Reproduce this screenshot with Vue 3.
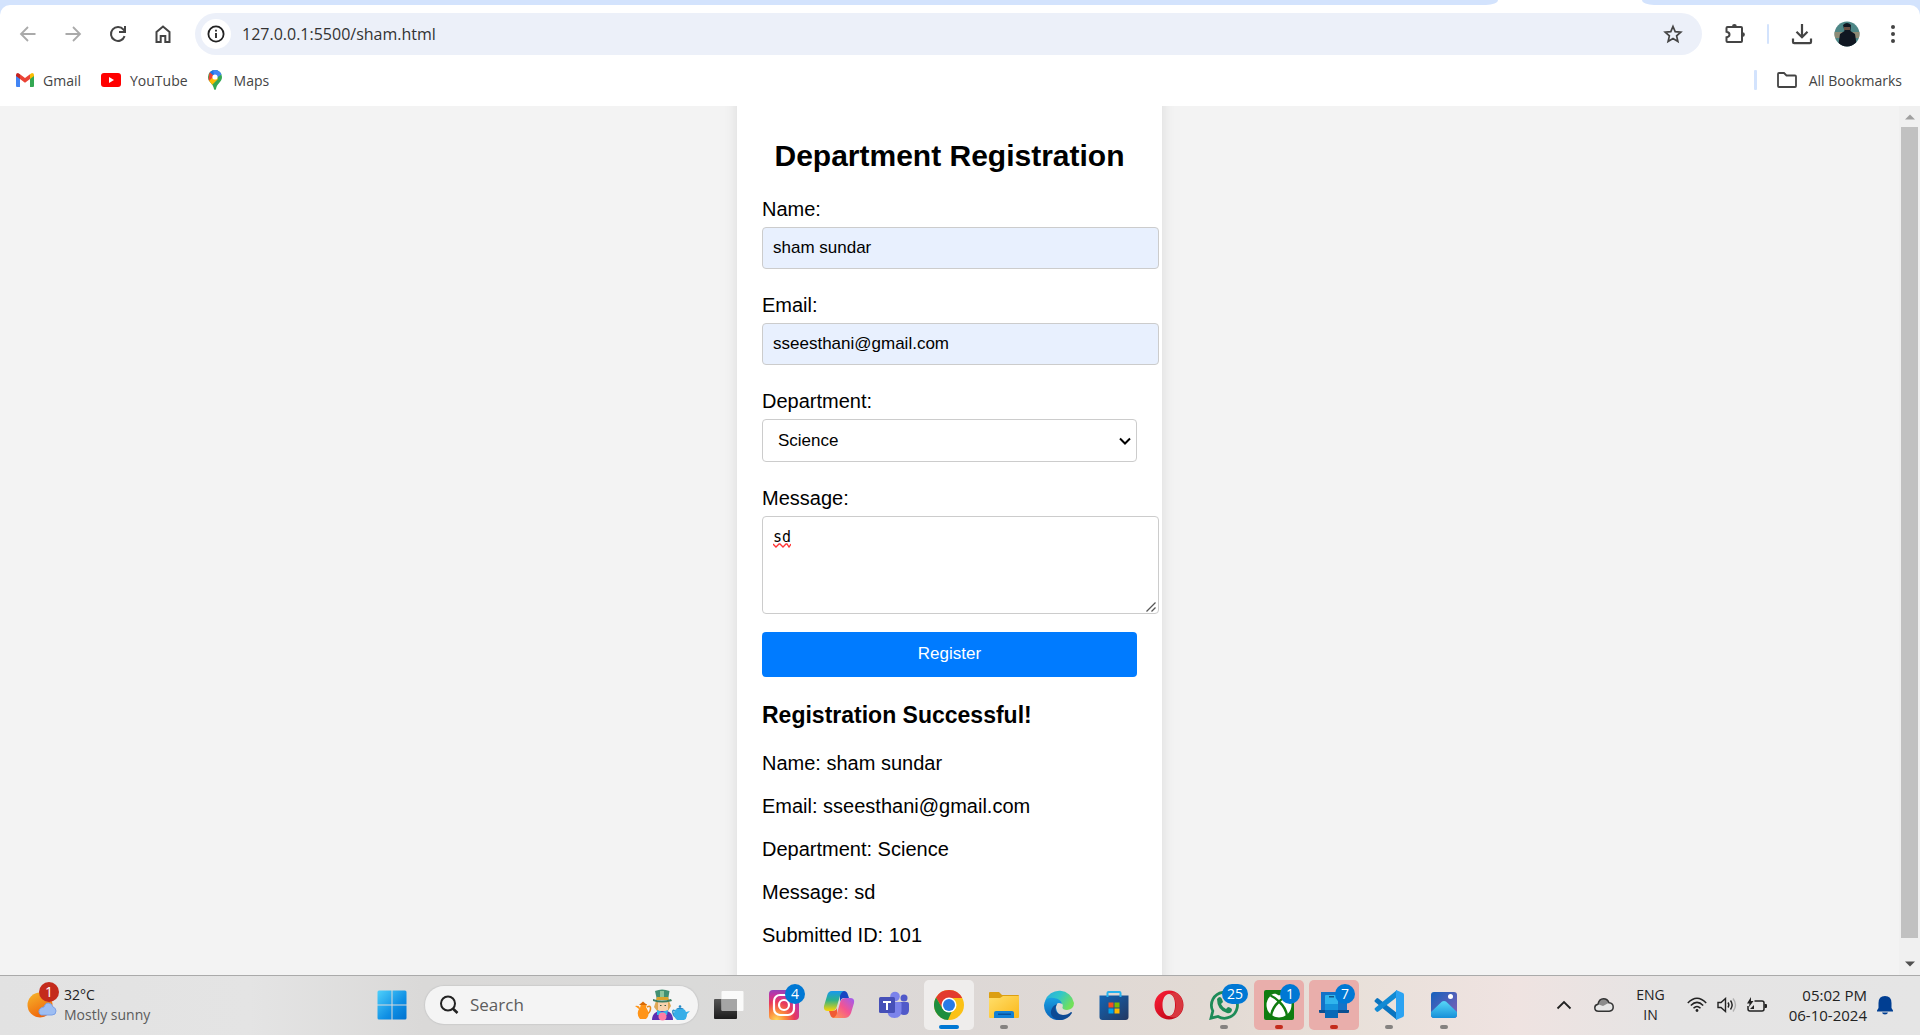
<script setup>
import { ref, reactive } from 'vue'

const address = ref('127.0.0.1:5500/sham.html')
const form = reactive({
  name: 'sham sundar',
  email: 'sseesthani@gmail.com',
  department: 'Science',
  message: 'sd'
})
const submitted = ref({ ...form, id: 101 })

function register() {
  submitted.value = { ...form, id: 101 }
}
</script>

<template>
  <div class="screen">
    <header class="browser">
      <div class="tabs">
        <div class="strip strip-left"></div>
        <div class="strip strip-right"></div>
      </div>
      <div class="chrome">
        <div class="toolbar">
          <button class="tool faded" aria-label="Back">
            <svg width="20" height="20" viewBox="0 0 20 20" fill="none" stroke="currentColor" stroke-width="1.8"><path d="M17.5 10H3.5M10 3 3 10l7 7" /></svg>
          </button>
          <button class="tool faded" aria-label="Forward">
            <svg width="20" height="20" viewBox="0 0 20 20" fill="none" stroke="currentColor" stroke-width="1.8"><path d="M2.500 10H16.500M10 3l7 7-7 7" /></svg>
          </button>
          <button class="tool" aria-label="Reload">
            <svg width="20" height="20" viewBox="0 0 20 20" fill="none" stroke="currentColor" stroke-width="2"><path d="M16.600 12.200A7 7 0 1 1 15.500 5.600L17 7.200M17 2v6h-6" /></svg>
          </button>
          <button class="tool" aria-label="Home">
            <svg width="20" height="20" viewBox="0 0 20 20" fill="none" stroke="currentColor" stroke-width="2"><path d="M3.500 8 10 2.500 16.500 8v10H12.300v-6H7.700v6H3.500z" /></svg>
          </button>
          <div class="omnibox">
            <button class="info" aria-label="Site information">
              <svg width="18" height="18" viewBox="0 0 18 18"><circle cx="9" cy="9" r="7.600" fill="none" stroke="#222" stroke-width="1.800" /><path d="M8.100 8h1.800v5H8.100zM8.100 4.800h1.800v1.800H8.100z" fill="#222" /></svg>
            </button>
            <input v-model="address" class="address" aria-label="Address" />
            <button class="star" aria-label="Bookmark this page">
              <svg width="20" height="20" viewBox="0 0 20 20" fill="none" stroke="#444" stroke-width="1.700"><path d="M10 2.500l2.200 5.200 5.600.5-4.200 3.700 1.300 5.500L10 14.500l-4.900 2.900 1.300-5.500-4.200-3.700 5.600-.5z" /></svg>
            </button>
          </div>
          <button class="tool" aria-label="Extensions">
            <svg width="22" height="22" viewBox="0 0 22 22" fill="none" stroke="currentColor" stroke-width="2"><path d="M3.500 4h13.500q1 0 1 1v13q0 1-1 1H3.500q-1 0-1-1v-3.700q3-.5 3-2.800t-3-2.800V5q0-1 1-1z" /><path d="M8 3.500a2.400 2.400 0 0 1 4.800 0zM18.500 9.200a2.400 2.400 0 0 1 0 4.800z" fill="currentColor" stroke="none" /></svg>
          </button>
          <span class="bar"></span>
          <button class="tool" aria-label="Downloads">
            <svg width="22" height="22" viewBox="0 0 22 22" fill="none" stroke="currentColor" stroke-width="2.200"><path d="M11 1v13M5.500 8.800 11 14.300l5.500-5.500M2 15.500v3.500q0 1.200 1.200 1.200h15.600q1.200 0 1.200-1.200v-3.500" /></svg>
          </button>
          <button class="tool profile" aria-label="Profile">
            <svg width="26" height="26" viewBox="0 0 26 26"><defs><clipPath id="face"><circle cx="13" cy="13" r="12.500" /></clipPath></defs><g clip-path="url(#face)"><path fill="#4e8787" d="M0 0h26v26H0z" /><path fill="#8d8b76" d="M0 11h26v6H0z" /><path fill="#101722" d="M9 4q4-4 8 0l-.5 6 4.500 3 2 13H4l2-13 4.500-3z" /><path fill="#6b4f42" d="M10 6h6v3h-6z" /></g></svg>
          </button>
          <button class="tool" aria-label="Menu">
            <svg width="20" height="20" viewBox="0 0 20 20" fill="currentColor"><circle cx="10" cy="3" r="2" /><circle cx="10" cy="10" r="2" /><circle cx="10" cy="17" r="2" /></svg>
          </button>
        </div>
        <nav class="bookmarks">
          <a href="#">
            <svg width="18" height="14" viewBox="0 0 18 14"><path fill="#4285f4" d="M0 2v11q0 1 1 1h3V5z" /><path fill="#34a853" d="M14 5v9h3q1 0 1-1V2z" /><path fill="#ea4335" d="M4 6V1.200l5 3.900 5-3.900V6L9 9.800z" /><path fill="#c5221f" d="M0 2q0-2 2-2l2 1.200V6L0 3z" /><path fill="#fbbc04" d="M18 2q0-2-2-2l-2 1.200V6l4-3z" /></svg>
            Gmail
          </a>
          <a href="#">
            <svg width="20" height="14" viewBox="0 0 20 14"><rect width="20" height="14" rx="3" fill="#f00" /><path d="M8 4v6l5-3z" fill="#fff" /></svg>
            YouTube
          </a>
          <a href="#" class="spaced">
            <svg width="14" height="20" viewBox="0 0 14 20"><defs><clipPath id="pin"><path d="M7 0a7 7 0 0 1 7 7c0 5-5 6-6 12q-1 2-2 0C5 13 0 12 0 7a7 7 0 0 1 7-7z" /></clipPath></defs><g clip-path="url(#pin)"><path fill="#34a853" d="M0 0h14v20H0z" /><path fill="#fbbc04" d="M-1 12 7 4l3 5-8 8z" /><path fill="#1a73e8" d="M0 0h10L5 8z" /><path fill="#4285f4" d="M5 0h9v4L7 9z" /><path fill="#ea4335" d="M1.500 2 6 6l-6 6z" /></g><circle cx="7" cy="7" r="2.600" fill="#fff" /></svg>
            Maps
          </a>
          <span class="bar bar-wide"></span>
          <a href="#" class="spaced">
            <svg width="20" height="16" viewBox="0 0 20 16" fill="none" stroke="#444" stroke-width="1.800"><path d="M1 13V2q0-1 1-1h5l2.500 2.500H18q1 0 1 1V14q0 1-1 1H2q-1 0-1-1z" /></svg>
            All Bookmarks
          </a>
        </nav>
      </div>
    </header>

    <main class="viewport">
      <div class="page">
        <section class="card">
          <h2>Department Registration</h2>
          <form @submit.prevent="register">
            <label for="name">Name:</label>
            <input id="name" v-model="form.name" type="text" />
            <label for="email">Email:</label>
            <input id="email" v-model="form.email" type="email" />
            <label for="department">Department:</label>
            <select id="department" v-model="form.department">
              <option>Science</option>
              <option>Arts</option>
              <option>Commerce</option>
            </select>
            <label for="message">Message:</label>
            <div class="message">
              <textarea id="message" v-model="form.message" spellcheck="false"></textarea>
              <svg class="squiggle" width="18" height="5" viewBox="0 0 18 5" fill="none" stroke="#f33" stroke-width="1.300"><path d="M0 1l3 3 3-3 1 0 3 3 3-3 1 0 2 3 2-3" /></svg>
              <svg class="grip" width="10" height="10" viewBox="0 0 10 10" fill="none" stroke="#555" stroke-width="1.300"><path d="M.500 9.500l9-9M5.500 9.500l4-4" /></svg>
            </div>
            <button class="submit" type="submit">Register</button>
          </form>
          <h3>Registration Successful!</h3>
          <p>Name: {{ submitted.name }}</p>
          <p>Email: {{ submitted.email }}</p>
          <p>Department: {{ submitted.department }}</p>
          <p>Message: {{ submitted.message }}</p>
          <p>Submitted ID: {{ submitted.id }}</p>
        </section>
      </div>
      <div class="scrollbar">
        <svg width="10" height="6" viewBox="0 0 10 6"><path fill="#a0a0a0" d="M0 5.500 5 .5l5 5z" /></svg>
        <span class="thumb"></span>
        <svg width="10" height="6" viewBox="0 0 10 6"><path fill="#505050" d="M0 .5h10l-5 5z" /></svg>
      </div>
    </main>

    <footer class="taskbar">
      <button class="weather">
        <span class="weather-icon">
          <svg width="30" height="28" viewBox="0 0 30 28"><defs><linearGradient id="sun" x1="0" y1="0" x2="0.500" y2="1"><stop offset="0" stop-color="#f6b72b" /><stop offset="1" stop-color="#f0660c" /></linearGradient></defs><circle cx="13" cy="14" r="12.500" fill="url(#sun)" /><path d="M14 24a4 4 0 0 1 0-7q2-1 3-1 2-6 7-3 1 1 2 3 3 1 3 4 0 4-4 4z" fill="#9dbdf2" stroke="#7ba0e6" /></svg>
          <span class="badge alert">1</span>
        </span>
        <span class="forecast"><span class="degrees">32°C</span><span>Mostly sunny</span></span>
      </button>

      <div class="apps">
        <button class="app" aria-label="Start">
          <svg width="30" height="30" viewBox="0 0 30 30"><defs><linearGradient id="win" x1="0" y1="0" x2="1" y2="1"><stop offset="0" stop-color="#4fd0fb" /><stop offset="0.600" stop-color="#0f8fe4" /><stop offset="1" stop-color="#0072d0" /></linearGradient></defs><path fill="url(#win)" d="M2 .5h12.500v14H.5V2Q.500.5 2 .5zM15.500.5H28q1.500 0 1.500 1.500v12.500h-14zM.500 15.500h14v14H2q-1.500 0-1.500-1.500zM15.500 15.500h14V28q0 1.500-1.500 1.500H15.500z" /></svg>
        </button>
        <div class="search">
          <svg width="20" height="20" viewBox="0 0 20 20" fill="none" stroke="#222" stroke-width="2"><circle cx="9" cy="8.500" r="7" /><path d="M13.800 13.500 18.500 18" stroke-width="2.600" /></svg>
          <input type="search" placeholder="Search" aria-label="Search" />
          <svg width="56" height="32" viewBox="0 0 56 32">
            <path fill="none" stroke="#ea8a1c" stroke-width="1.600" d="M12 18q4-2 3.500 2t-4 5" /><path fill="#ff9417" d="M6 15h6l-1 3q5 8 0 12H5q-4-5-1-10L0 17q4-1 5 2z" /><path fill="#d96a05" d="M8 12.500 12 16H4z" />
            <path fill="#dfa855" d="M21 12h13l2 5-3 5H22l-3-4z" /><path fill="#f8d2ad" d="M23 13h10v8q-5 4-10 0z" /><path fill="#429072" d="M20 2q7-3 14.500 0l-1.500 9H22z" /><path fill="#8bc49c" d="M25 2h4v6h-4z" /><path fill="#dba32d" d="M22 8h11l1 3H21z" /><path fill="#3d7d62" d="M18 10q9 3 18 0l1 2q-10 3-19 0z" /><path fill="#5f2fb1" d="M17 31q0-7 7-9l8 0q6 2 6 9z" /><path fill="#34b5ec" d="m22 21 5 2 6-2-1 5H22z" /><circle cx="27.500" cy="27.500" r="4" fill="#ff7da4" /><path stroke="#345b47" stroke-width="1.200" d="M25 16.500h1.500M29.500 16.500H31" />
            <path fill="none" stroke="#2b8fc9" stroke-width="1.500" d="M40 22q-3-2-2 2t4 4" /><path fill="#36aee8" d="M40 21q5-4 10 0l1 2 4-1-3 3q0 5-3 6h-7q-5-4-2-10z" /><path fill="#2789c5" d="M41 20q4-3 8 0z" /><circle cx="45" cy="17.500" r="1.300" fill="#2789c5" />
          </svg>
        </div>
        <button class="app" aria-label="Task view">
          <svg width="30" height="30" viewBox="0 0 30 30"><defs><linearGradient id="tv" x1="0" y1="0" x2="0" y2="1"><stop offset="0" stop-color="#555" /><stop offset="1" stop-color="#1c1c1c" /></linearGradient></defs><rect y="9" width="23" height="20" rx="1" fill="url(#tv)" /><rect x="7.500" y="1" width="22" height="20" rx="1" fill="#fff" opacity=".85" /><path fill="#a5a5a5" d="M8 9h15v12H8z" /></svg>
        </button>
        <button class="app" aria-label="Instagram">
          <svg width="30" height="30" viewBox="0 0 30 30"><defs><radialGradient id="ig" cx=".25" cy="1" r="1.200"><stop offset="0" stop-color="#ffd95a" /><stop offset=".25" stop-color="#fb8a3c" /><stop offset=".5" stop-color="#e93a5a" /><stop offset=".7" stop-color="#c433a0" /><stop offset="1" stop-color="#5b55d6" /></radialGradient></defs><rect width="30" height="30" rx="4" fill="url(#ig)" /><g fill="none" stroke="#fff" stroke-width="2.200"><rect x="5" y="5" width="20" height="20" rx="6" /><circle cx="15" cy="15" r="5" /></g><circle cx="21" cy="9" r="1.500" fill="#fff" /></svg>
          <span class="badge">4</span>
        </button>
        <button class="app" aria-label="Copilot">
          <svg width="32" height="30" viewBox="0 0 32 30"><defs><linearGradient id="ca" x1="0" y1="0" x2="0" y2="1"><stop offset="0" stop-color="#1798ef" /><stop offset=".45" stop-color="#2cb18c" /><stop offset="1" stop-color="#ffd500" /></linearGradient><linearGradient id="cb" x1="1" y1="0" x2="0" y2="1"><stop offset="0" stop-color="#9b5cf6" /><stop offset=".5" stop-color="#f5558f" /><stop offset="1" stop-color="#ffa04d" /></linearGradient></defs><path fill="#1745c2" d="M17 1h4q3 0 4 4l1 3h-5q-3 0-4 4z" /><path fill="url(#ca)" d="M9 1h12q-3 1-4 5l-3 10q-1 5-6 5H5q-5 0-4-5L4 6q1-5 5-5z" /><path fill="#f05b34" d="M14 28h-3q-3 0-4-4l-1-3h3q4 0 5-3z" /><path fill="url(#cb)" d="M22 28H10q3-1 4-5l3-10q1-5 6-5h4q5 0 4 5l-3 10q-2 5-6 5z" /></svg>
        </button>
        <button class="app" aria-label="Teams">
          <svg width="30" height="28" viewBox="0 0 30 28"><circle cx="25" cy="7" r="3.500" fill="#5059c9" /><path fill="#5059c9" d="M20 11h8q2 0 2 2v6q0 5-5 5-4 0-5-4z" /><circle cx="16" cy="5.500" r="4.800" fill="#7b83eb" /><path fill="#7b83eb" d="M9 11h12q1.500 0 1.500 1.500V20q0 7-7 7t-7-7z" /><rect y="6" width="16" height="16" rx="1.500" fill="#4650b8" /><path fill="#fff" d="M4 10h8v2H9v7H7v-7H4z" /></svg>
        </button>
        <button class="app active" aria-label="Chrome">
          <svg width="30" height="30" viewBox="0 0 30 30"><circle cx="15" cy="15" r="15" fill="#fbc116" /><path fill="#e33b2e" d="M2 7.500 8.500 18.500 15 8h13.200A15 15 0 0 0 2 7.500z" /><path fill="#1e8e3e" d="M2 7.500 8.500 18.500q3 4 9 3.500L14 30A15 15 0 0 1 2 7.500z" /><circle cx="15" cy="15" r="7.500" fill="#fff" /><circle cx="15" cy="15" r="6" fill="#287ae8" /></svg>
          <span class="mark"></span>
        </button>
        <button class="app" aria-label="File Explorer">
          <svg width="30" height="28" viewBox="0 0 30 28"><defs><linearGradient id="fe" x1="0" y1="0" x2="1" y2="1"><stop offset="0" stop-color="#ffdf6b" /><stop offset="1" stop-color="#fbb81b" /></linearGradient></defs><path fill="#dc9f12" d="M0 2q0-1 1-1h9l3 3h16q1 0 1 1v6H0z" /><path fill="url(#fe)" d="M0 7h11l3-2h16v21q0 1-1 1H1q-1 0-1-1z" /><path fill="#1280d6" d="M5 27v-5q0-2 2-2h16q2 0 2 2v5z" /><path fill="#07519b" d="M9 22.500h13v1.500H9z" /></svg>
          <span class="mark"></span>
        </button>
        <button class="app" aria-label="Edge">
          <svg width="30" height="30" viewBox="0 0 30 30"><defs><linearGradient id="ea" x1="0" y1="0" x2="1" y2=".5"><stop offset="0" stop-color="#29a9e0" /><stop offset=".5" stop-color="#31c6ca" /><stop offset="1" stop-color="#72e05a" /></linearGradient><linearGradient id="eb" x1="0" y1="0" x2="0" y2="1"><stop offset="0" stop-color="#1aa1e2" /><stop offset="1" stop-color="#075fb8" /></linearGradient></defs><path fill="url(#ea)" d="M1 11A15 15 0 0 1 30 13q0 6-7 7-5 0-4.500-3 1-2-1-4Q10 6 1 11z" /><path fill="url(#eb)" d="M0 15Q1 6 10 8q7 1 8 6-6-3-6 4 1 7 9 11A15 15 0 0 1 0 15z" /><path fill="#0d4a94" d="M13 14q-5 9 6 11 5 0 8-3 1 0 1 1-4 7-13 7-9-2-8-9 1-5 6-7z" /></svg>
        </button>
        <button class="app" aria-label="Microsoft Store">
          <svg width="30" height="30" viewBox="0 0 30 30"><defs><linearGradient id="ms" x1="0" y1="0" x2="1" y2="1"><stop offset="0" stop-color="#1265b5" /><stop offset="1" stop-color="#243861" /></linearGradient></defs><path d="M.500 5.500h29V27q0 3-3 3h-23q-3 0-3-3z" fill="url(#ms)" /><path d="M8.500 7V3q0-1 1-1h11q1 0 1 1v4" fill="none" stroke="#27b3ee" stroke-width="2" /><path fill="#f25022" d="M9.500 12.500H14.500V17.500h-5z" /><path fill="#7fba00" d="M15.500 12.500h5v5h-5z" /><path fill="#00a4ef" d="M9.500 18.500h5v5h-5z" /><path fill="#ffb900" d="M15.500 18.500h5v5h-5z" /></svg>
        </button>
        <button class="app" aria-label="Opera">
          <svg width="30" height="30" viewBox="0 0 30 30"><defs><linearGradient id="op" x1="0" y1="0" x2="1" y2="1"><stop offset="0" stop-color="#ff2038" /><stop offset="1" stop-color="#b0000f" /></linearGradient></defs><path fill="url(#op)" fill-rule="evenodd" d="M15 .5a14.500 14.500 0 1 1 0 29 14.500 14.500 0 0 1 0-29zM15 4c-4 0-6.500 5-6.500 11s2.500 11 6.500 11 6-5 6-11-2-11-6-11z" /><path fill="#d9373f" d="M15 3.500q6-2 9 0 5 5 5 11.500t-5 11.500q-4 2-9 0 6-1 7-11.500-1-10.500-7-11.500z" /></svg>
        </button>
        <button class="app" aria-label="WhatsApp">
          <svg width="30" height="30" viewBox="0 0 30 30"><path fill="none" stroke="#1e8b58" stroke-width="2.800" d="M2 28.200 3.800 21a13 13 0 1 1 5.200 5.500z" /><path fill="#1e8b58" d="M8 9q3-4 5 0l1 3-2 2q2 4 5 5l2-2q4 1 4 3-1 4-5 3Q8 20 8 9z" /></svg>
          <span class="badge wide">25</span>
          <span class="mark"></span>
        </button>
        <button class="app attention" aria-label="Xbox">
          <svg width="30" height="30" viewBox="0 0 30 30"><rect width="30" height="30" rx="2" fill="#107c10" /><circle cx="15" cy="15" r="12.500" fill="#fff" /><path fill="#107c10" d="M7.500 3Q12 3 15 5.500 18 3 22.500 3L20 1H10z" /><path fill="none" stroke="#107c10" stroke-width="2.400" d="M7 26Q8 18 15 11.500 22 18 23 26M15 11.500Q11 7.500 6.500 5.500M15 11.500q4-4 8.500-6" /></svg>
          <span class="badge">1</span>
          <span class="mark"></span>
        </button>
        <button class="app attention" aria-label="Phone Link">
          <svg width="30" height="28" viewBox="0 0 30 28"><path fill="#1473c8" d="M2 1h26v20H2z" /><path fill="#0b4f91" d="M0 19h30v2q0 1-1 1H1q-1 0-1-1z" /><rect x="6" y="4" width="13" height="23" rx="1" fill="#30b5ed" /><path fill="#1593dc" d="M6 13h13v6H6z" /><path fill="#0869b7" d="M6 19h13v8H6z" /><path fill="#125687" d="M10 5h5v1.500h-5z" /></svg>
          <span class="badge">7</span>
          <span class="mark"></span>
        </button>
        <button class="app" aria-label="Visual Studio Code">
          <svg width="30" height="30" viewBox="0 0 30 30"><path fill="#0a74bf" d="m1 10 2-2q1 0 2 1l18 14v7L1 12q-1-1 0-2z" /><path fill="#118ad4" d="m1 20 2 2q1 0 2-1L23 7V0L1 18q-1 1 0 2z" /><path fill="#2ca3f2" d="m22 0 7 3q1 .5 1 2v20q0 1.500-1 2l-7 3z" /></svg>
          <span class="mark"></span>
        </button>
        <button class="app" aria-label="Photos">
          <svg width="26" height="26" viewBox="0 0 26 26"><defs><linearGradient id="ph" x1="0" y1="0" x2="1" y2="1"><stop offset="0" stop-color="#1461bd" /><stop offset="1" stop-color="#8660b5" /></linearGradient><linearGradient id="pi" x1="0" y1="0" x2="0" y2="1"><stop offset="0" stop-color="#58d8f8" /><stop offset="1" stop-color="#168fd8" /></linearGradient></defs><rect width="26" height="26" rx="3" fill="url(#ph)" /><path d="M0 20 11 9.500q2-1 4 0L26 20v3q0 3-3 3H3q-3 0-3-3z" fill="url(#pi)" /><circle cx="19.500" cy="4.500" r="2.500" fill="#fff" /></svg>
          <span class="mark"></span>
        </button>
      </div>

      <div class="tray">
        <button aria-label="Show hidden icons"><svg width="16" height="10" viewBox="0 0 16 10" fill="none" stroke="#222" stroke-width="1.800"><path d="m1.500 8.500 6.500-6.500 6.500 6.500" /></svg></button>
        <button aria-label="OneDrive"><svg width="20" height="14" viewBox="0 0 20 14"><path d="M4.500 13.200q-3.700 0-3.700-3.500 0-3 3.200-3.500Q5 .8 9.500.8q4 0 5.500 4 4.200.2 4.200 4.300 0 4-4 4.100z" fill="#e6e6e6" /><path fill="#8b8b8b" d="M4 6.200Q5 .8 9.500.8q4 0 5.500 4L9 8z" /><path d="M4.500 13.200q-3.700 0-3.700-3.500 0-3 3.200-3.500Q5 .8 9.500.8q4 0 5.500 4 4.200.2 4.200 4.300 0 4-4 4.100z" fill="none" stroke="#333" stroke-width="1.500" /></svg></button>
        <button class="language"><span>ENG</span><span>IN</span></button>
        <button class="status" aria-label="Network, sound and battery">
          <svg width="20" height="16" viewBox="0 0 20 16" fill="none" stroke="#222" stroke-width="1.500"><path d="M.800 6q9.200-9.500 18.400 0M3.800 8.500q6.200-6.200 12.400 0M6.500 11.200q3.500-3.500 7 0" /><circle cx="10" cy="13.500" r="1.400" fill="#222" stroke="none" /></svg>
          <svg width="20" height="16" viewBox="0 0 20 16" fill="none" stroke="#222" stroke-width="1.400"><path d="M1 5.500h3L8.500 1.500v13L4 10.500H1z" /><path d="M11 5.500q1.700 2.500 0 5M13.500 3.500q3.300 4.500 0 9" /><path stroke="#b0b0b0" d="M16 1.500q5 6.500 0 13" /></svg>
          <svg width="20" height="16" viewBox="0 0 20 16" fill="none" stroke="#222" stroke-width="1.500"><path d="M7.500 4H15q2 0 2 2v6q0 2-2 2H3q-2 0-2-2V9" /><path fill="#222" stroke="none" d="M17.500 7H19q1 0 1 1v2q0 1-1 1h-1.500zM4 0 0 6.500h2.500L2 10l4.500-6H4zM3 12l4-4v4z" /></svg>
        </button>
        <button class="clock"><span>05:02 PM</span><span>06-10-2024</span></button>
        <button aria-label="Notifications"><svg width="16" height="20" viewBox="0 0 16 20" fill="#003e92"><path d="M1.500 13V8Q1.500 1 8 1t6.500 7v5l1.500 2.500v1H0v-1zM5 17.500h6q-.5 2-3 2t-3-2z" /></svg></button>
      </div>
    </footer>
  </div>
</template>

<style>
body {
  margin: 0;
}
</style>

<style scoped>
.screen {
  display: flex;
  flex-direction: column;
  height: 100vh;
  overflow: hidden;
  background: #fff;
  font-family: "Open Sans", "Noto Sans", sans-serif;
}
* {
  box-sizing: border-box;
}
button {
  border: 0;
  padding: 0;
  background: none;
  font-family: inherit;
}
svg {
  display: block;
  flex: none;
}
.browser {
  background: #d3e3fd;
}
.tabs {
  display: flex;
  justify-content: space-between;
  height: 5px;
  background: #fff;
}
.strip {
  background: #d3e3fd;
}
.strip-left {
  width: 78%;
  border-bottom-right-radius: 12px 5px;
}
.strip-right {
  width: 278px;
  border-bottom-left-radius: 12px 5px;
}
.chrome {
  height: 101px;
  padding-top: 8px;
  border-radius: 10px 10px 0 0;
  background: #fff;
}
.toolbar {
  display: flex;
  align-items: center;
  height: 42px;
  padding: 0 15px;
}
.tool {
  display: grid;
  place-items: center;
  width: 25px;
  margin-right: 20px;
  color: #444;
}
.tool:last-child {
  margin-right: 0;
}
.faded {
  color: #aaa;
}
.omnibox {
  display: flex;
  flex: 1;
  align-items: center;
  height: 42px;
  margin-right: 20px;
  padding: 0 19px 0 6px;
  border-radius: 21px;
  background: #ecf0f9;
}
.info {
  display: grid;
  place-items: center;
  width: 30px;
  height: 30px;
  border-radius: 15px;
  background: #fff;
}
.address {
  flex: 1;
  margin-left: 11px;
  padding: 0;
  border: 0;
  outline: 0;
  background: none;
  color: #333;
  font: 16px "Open Sans", sans-serif;
}
.bar {
  width: 2px;
  height: 20px;
  margin-right: 20px;
  border-radius: 1px;
  background: #d3e3fd;
}
.profile {
  width: 26px;
}
.bookmarks {
  display: flex;
  align-items: center;
  height: 50px;
  padding: 0 18px 0 16px;
  gap: 20px;
}
.bookmarks a {
  display: flex;
  align-items: center;
  gap: 9px;
  color: #444;
  font-size: 14px;
  text-decoration: none;
}
.bookmarks .spaced {
  gap: 12px;
}
.bookmarks .bar-wide {
  width: 3px;
  margin: 0 0 0 auto;
}
.viewport {
  display: flex;
  flex: 1;
  min-height: 0;
  overflow: hidden;
  background: #f3f3f3;
  font-family: "Liberation Sans", Arial, sans-serif;
}
.page {
  display: flex;
  flex: 1;
  justify-content: center;
}
.card {
  width: 425px;
  height: 940px;
  margin-top: -30px;
  padding: 62px 25px 0;
  background: #fff;
  box-shadow: 0 0 13px rgba(0, 0, 0, 0.1);
  color: #000;
  font-size: 20px;
}
h2 {
  margin: 0 0 24px;
  font-size: 30px;
  line-height: 36px;
  text-align: center;
}
label {
  display: block;
  margin-bottom: 6px;
  line-height: 23px;
}
form input,
form select {
  display: block;
  height: 42px;
  margin-bottom: 25px;
  border: 1px solid #ccc;
  border-radius: 4px;
  color: #000;
  font: 17px "Liberation Sans", Arial, sans-serif;
}
form input {
  width: 397px;
  padding: 0 10px;
  background: #e8f0fe;
}
form select {
  appearance: none;
  width: 100%;
  height: 43px;
  padding: 0 15px;
  background: #fff url("data:image/svg+xml,%3Csvg xmlns='http://www.w3.org/2000/svg' width='12' height='8'%3E%3Cpath d='M1 1.500l5 5 5-5' fill='none' stroke='black' stroke-width='2'/%3E%3C/svg%3E") no-repeat right 5px center;
}
.message {
  position: relative;
  width: 397px;
  margin-bottom: 18px;
}
textarea {
  display: block;
  width: 100%;
  height: 98px;
  padding: 10px;
  border: 1px solid #ccc;
  border-radius: 4px;
  color: #000;
  font: 15px/20px "DejaVu Sans Mono", monospace;
  resize: none;
}
.squiggle {
  position: absolute;
  top: 27px;
  left: 11px;
}
.grip {
  position: absolute;
  right: 3px;
  bottom: 2px;
}
.submit {
  width: 100%;
  height: 45px;
  padding-bottom: 2px;
  border-radius: 4px;
  background: #007bff;
  color: #fff;
  font-size: 17px;
}
h3 {
  margin: 25px 0 23px;
  font-size: 23px;
  line-height: 27px;
}
p {
  margin: 0 0 20px;
  line-height: 23px;
}
.scrollbar {
  display: flex;
  flex-direction: column;
  align-items: center;
  width: 21px;
  padding: 8px 0;
  gap: 7px;
  background: #f0f0f0;
}
.scrollbar .thumb {
  width: 17px;
  flex: 1;
  margin-bottom: 16px;
  background: #c1c1c1;
}
.taskbar {
  display: flex;
  align-items: center;
  height: 60px;
  padding: 0 27px 2px;
  border-top: 1px solid #aaa;
  background: linear-gradient(90deg, #e2e2e2, #e4e4e4 13%, #dad9d8 22%, #dadad9 36%, #ddd8d6 50%, #e2dad4 63%, #e8e0d9 70%, #efe3e1 79%, #e5e4e4 87%, #e5e5e5);
}
.weather {
  display: flex;
  align-items: center;
  width: 340px;
  gap: 7px;
  text-align: left;
}
.weather-icon {
  position: relative;
}
.forecast {
  display: flex;
  flex-direction: column;
  color: #5b5b5b;
  font-size: 14px;
  line-height: 20px;
}
.degrees {
  color: #222;
}
.apps {
  display: flex;
  align-items: center;
  gap: 5px;
}
.app {
  position: relative;
  display: grid;
  place-items: center;
  width: 50px;
  height: 50px;
  border-radius: 5px;
}
.active {
  background: #efedec;
}
.attention {
  background: #e9aeab;
}
.mark {
  position: absolute;
  bottom: 1px;
  left: 21px;
  width: 8px;
  height: 4px;
  border-radius: 2px;
  background: #858280;
}
.active .mark {
  left: 15px;
  width: 20px;
  background: #0078d4;
}
.attention .mark {
  background: #c42b1c;
}
.badge {
  position: absolute;
  top: 4px;
  right: 4px;
  min-width: 20px;
  height: 20px;
  border-radius: 10px;
  background: #0078d4;
  color: #fff;
  font-size: 14px;
  line-height: 20px;
  text-align: center;
}
.wide {
  right: 1px;
  width: 26px;
}
.alert {
  top: -9px;
  right: -2px;
  background: #c42b1c;
}
.search {
  display: flex;
  align-items: center;
  width: 273px;
  height: 38px;
  margin: 0 1px 0 3px;
  padding: 0 7px 0 14px;
  border-radius: 19px;
  background: #f4f4f4;
  box-shadow: 0 0 1px 1px #ccc;
}
.search input {
  flex: 1;
  min-width: 0;
  margin-left: 11px;
  padding: 0;
  border: 0;
  outline: 0;
  background: none;
  font: 17px "Open Sans", sans-serif;
}
.search input::placeholder {
  color: #5c5c5c;
}
.tray {
  display: flex;
  align-items: center;
  margin-left: auto;
  gap: 22px;
  color: #222;
}
.language,
.clock {
  display: flex;
  flex-direction: column;
  color: #222;
  font-size: 14px;
  line-height: 20px;
}
.language {
  align-items: center;
}
.clock {
  align-items: flex-end;
  margin-right: -12px;
  font-size: 15px;
}
.status {
  display: flex;
  gap: 10px;
}
</style>
